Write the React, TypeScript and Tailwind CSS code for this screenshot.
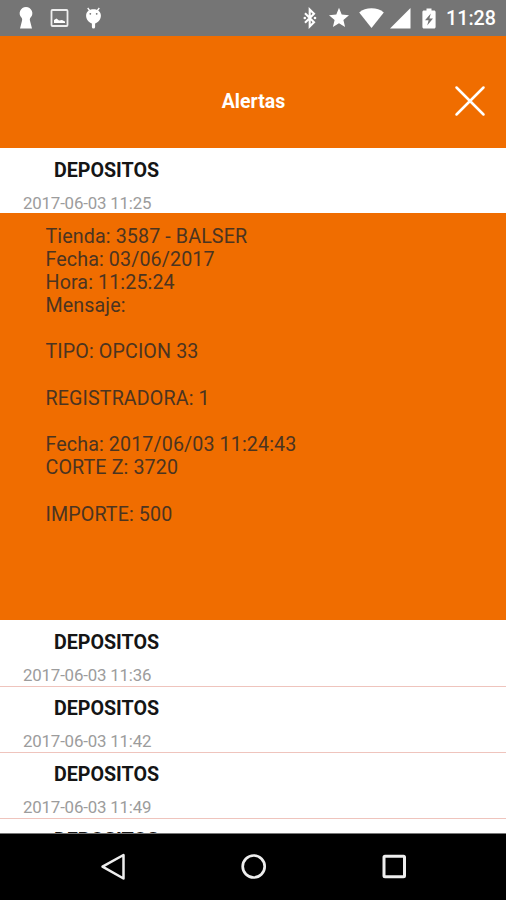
import React from "react";

const details = [
  "Tienda: 3587 - BALSER",
  "Fecha: 03/06/2017",
  "Hora: 11:25:24",
  "Mensaje:",
  "",
  "TIPO: OPCION 33",
  "",
  "REGISTRADORA: 1",
  "",
  "Fecha: 2017/06/03 11:24:43",
  "CORTE Z: 3720",
  "",
  "IMPORTE: 500",
];

function StatusBar() {
  return (
    <div className="flex h-9 shrink-0 items-center bg-[#757575] text-white">
      <svg className="ml-[18px] h-6 w-4" viewBox="0 0 16 24" fill="#fff">
        <path d="M8 1a6.300 6.300 0 0 0-4.600 10.600c.8.9.9 2 .6 3.200L2 22.600h12l-2-7.800c-.3-1.200-.2-2.300.6-3.200A6.300 6.300 0 0 0 8 1z" />
      </svg>
      <svg className="ml-[16px] h-[18px] w-[19px]" viewBox="0 0 19 18" fill="none">
        <rect x="1.500" y="1" width="16" height="16" rx="1" stroke="#eee" strokeWidth="1.800" />
        <path d="M4 14v-3l2.500-1.500 2.500 2 3-.5 3 1.500V14z" fill="#fff" />
      </svg>
      <svg className="ml-[15px] h-6 w-[19px]" viewBox="0 0 19 24">
        <path d="M3.700 2l2.300 3M15.300 2l-2.300 3" stroke="#fff" strokeWidth="1.300" />
        <path d="M9.500 3.300c-4.500 0-7.400 2.600-7.400 6.300 0 3.900 2.500 7 5.800 7.900v3.500a1.600 1.600 0 0 0 3.200 0v-3.500c3.300-.9 5.800-4 5.800-7.900 0-3.700-2.900-6.300-7.400-6.300z" fill="#fff" />
        <circle cx="6.300" cy="7.800" r=".9" fill="#757575" />
        <circle cx="12.700" cy="7.800" r=".9" fill="#757575" />
      </svg>
      <div className="ml-auto flex items-center pr-[10px]">
        <svg className="h-[22px] w-4" viewBox="0 0 16 22" fill="none" stroke="#fff" strokeWidth="2.100">
          <path d="M3 6.200l9 9-4.300 4.300v-17L12 6.800l-9 9" />
          <circle cx="2.800" cy="11" r="1.300" fill="#fff" stroke="none" />
          <circle cx="13" cy="11" r="1.300" fill="#fff" stroke="none" />
        </svg>
        <svg className="ml-[10px] h-[22px] w-[22px]" viewBox="0 0 22 22" fill="#fff">
          <path d="M11 .8l2.700 6.800 7.300.6-5.600 4.800 1.700 7.100-6.100-3.800-6.100 3.800L6.600 13 1 8.200l7.300-.6z" />
        </svg>
        <svg className="ml-[9px] h-[20px] w-[25px]" viewBox="0 0 25 20" fill="#fff">
          <path d="M12.500 20L.2 4.500C3.500 1.700 7.700.3 12.500.3s9 1.400 12.300 4.200z" />
        </svg>
        <svg className="ml-[6px] h-[21px] w-[21px]" viewBox="0 0 21 21" fill="#fff">
          <path d="M0 20.500h20.500V0z" />
        </svg>
        <svg className="ml-[11px] h-[21px] w-[14px]" viewBox="0 0 14 21">
          <path d="M4.500.5h5v2H12c1 0 1.600.6 1.600 1.500v15c0 .900-.6 1.500-1.600 1.500H2c-1 0-1.600-.6-1.600-1.500V4c0-.9.6-1.500 1.600-1.500h2.500z" fill="#fff" />
          <path d="M8.800 5.500L3 12.300h3.600L5.200 17.500 11 10.600H7.400z" fill="#757575" />
        </svg>
        <span className="ml-[10px] w-[50px] pt-[2px] whitespace-nowrap text-[19.700px] leading-6 font-medium">11:28</span>
      </div>
    </div>
  );
}

function AlertRow({ date, className = "" }: { date?: string; className?: string }) {
  return (
    <section className={`flex shrink-0 flex-col bg-white ${className}`}>
      <h2 className="pl-[54px] text-[19.680px] leading-[23px] font-bold tracking-[-0.020px] text-[#151515]">DEPOSITOS</h2>
      {date && (
        <time className="mt-[11px] pl-[23px] text-[16.870px] leading-[20px] tracking-[-0.190px] text-[#9c9c9c]">{date}</time>
      )}
    </section>
  );
}

export default function App() {
  return (
    <div className="flex h-[900px] w-[506px] flex-col overflow-hidden bg-white font-['Roboto',sans-serif]">
      <StatusBar />
      <header className="grid h-28 shrink-0 grid-cols-[1fr_auto_1fr] items-center bg-[#f06d00] pt-[18px]">
        <span />
        <h1 className="pt-[2px] pl-px text-[19.500px] leading-6 font-bold text-white">Alertas</h1>
        <svg className="mr-[20px] h-8 w-8 justify-self-end" viewBox="0 0 32 32" fill="none" stroke="#fff" strokeWidth="2.500">
          <path d="M2.500 2.500l27 27M29.500 2.500l-27 27" strokeLinecap="round" />
        </svg>
      </header>
      <main className="flex min-h-0 flex-1 flex-col overflow-hidden">
        <AlertRow date="2017-06-03 11:25" className="h-[65px] pt-[11px]" />
        <div className="h-[407px] shrink-0 bg-[#f06d00] pt-[11.700px] pl-[45.500px] text-[19.680px] leading-[23.170px] tracking-[0.110px] text-[#4b3420]">
          {details.map((line, i) => (
            <p key={i} className="h-[23.170px] whitespace-pre">{line}</p>
          ))}
        </div>
        <AlertRow date="2017-06-03 11:36" className="h-[67px] border-b border-[#efc4bd] pt-[11px]" />
        <AlertRow date="2017-06-03 11:42" className="h-[66px] border-b border-[#efc4bd] pt-[10px]" />
        <AlertRow date="2017-06-03 11:49" className="h-[66px] border-b border-[#efc4bd] pt-[10px]" />
        <AlertRow className="pt-[10px]" />
      </main>
      <nav className="flex h-[67px] shrink-0 items-center border-t border-[#777] bg-black pl-[100px]">
        <svg className="h-7 w-7" viewBox="0 0 28 28" fill="none" stroke="#eee" strokeWidth="2.500">
          <path d="M2.500 13.700L23.500 2v23.500z" strokeLinejoin="round" />
        </svg>
        <svg className="ml-[112px] h-7 w-7" viewBox="0 0 28 28" fill="none" stroke="#eee" strokeWidth="2.700">
          <circle cx="13.700" cy="13.500" r="11" />
        </svg>
        <svg className="ml-[112px] h-7 w-7" viewBox="0 0 28 28" fill="none" stroke="#eee" strokeWidth="3">
          <rect x="4" y="3.300" width="20.500" height="20.500" rx="1" />
        </svg>
      </nav>
    </div>
  );
}
